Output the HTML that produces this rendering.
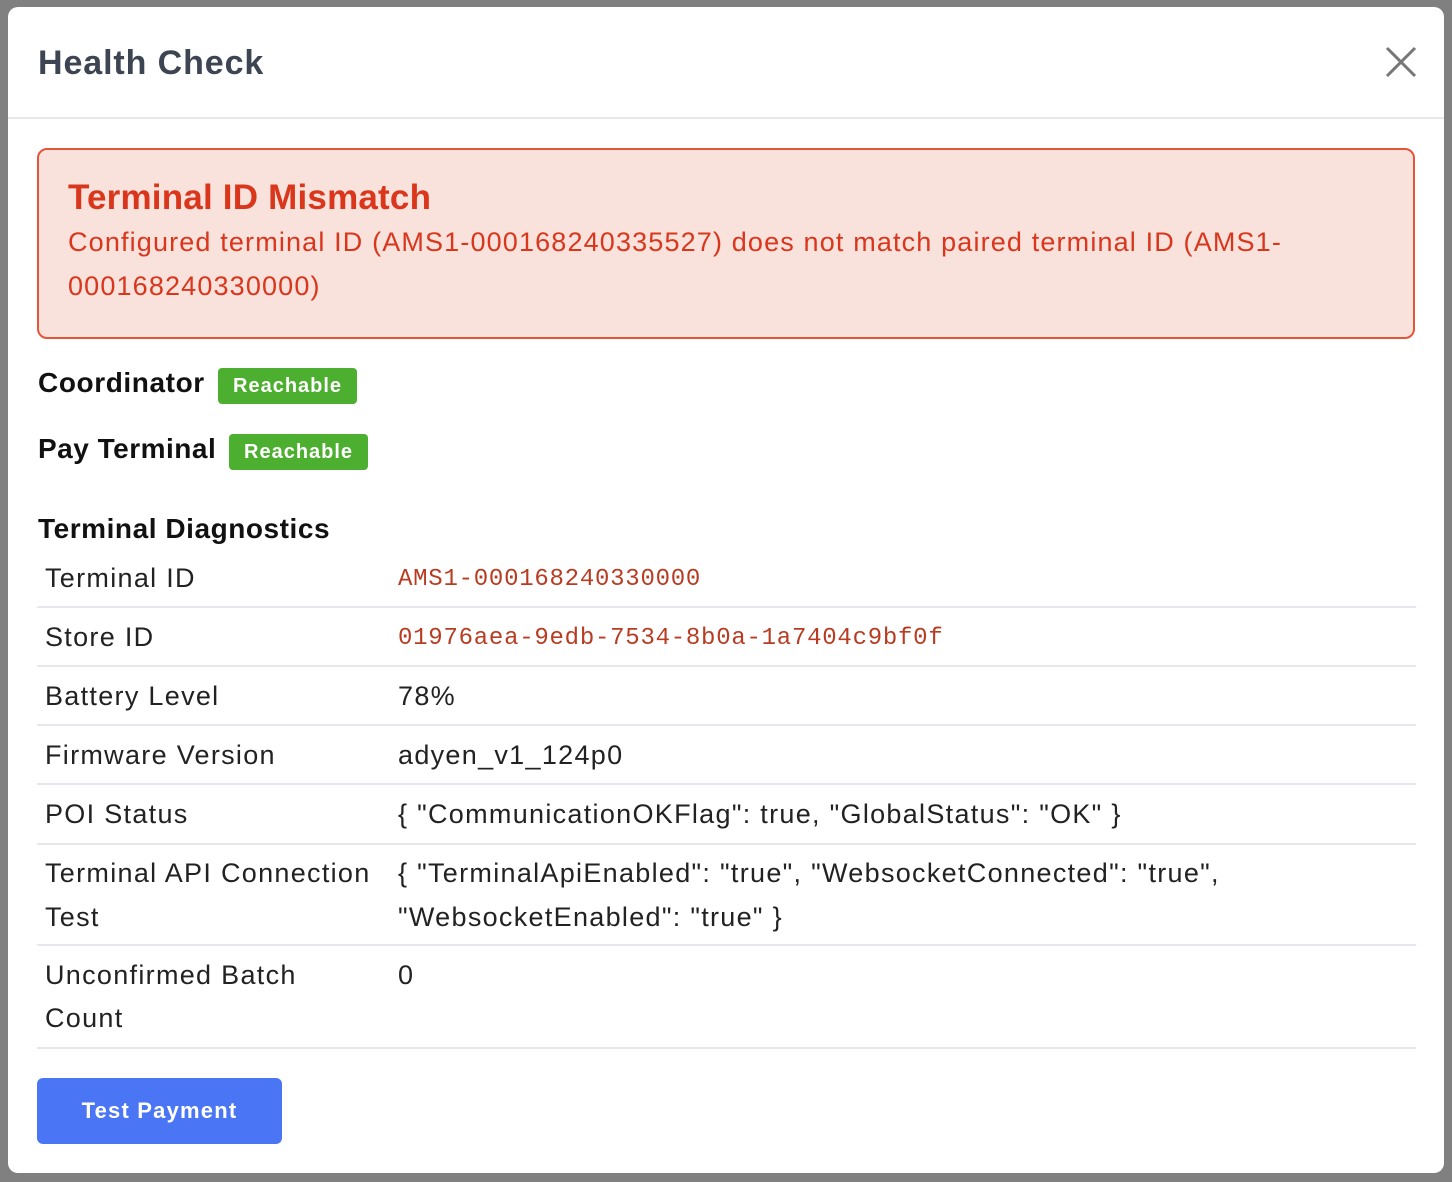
<!DOCTYPE html>
<html><head><style>
body{margin:0;width:1452px;height:1182px;background:#808080;position:relative;overflow:hidden;font-family:"Liberation Sans",sans-serif}
.m{position:absolute;left:8px;top:7px;width:1436px;height:1166px;background:#fff;border-radius:10px}
.a{position:absolute;white-space:nowrap}
.hr{position:absolute;left:37px;width:1379px;height:2px;background:#e6e8ee}
.lbl{font-size:27px;color:#222;letter-spacing:1.3px}
.mono{font-family:"Liberation Mono",monospace;font-size:24px;color:#b83c22;letter-spacing:0.75px}
.badge{position:absolute;background:#4caf2f;color:#fff;font-weight:bold;font-size:20px;border-radius:4px;height:36px;line-height:36px;padding:0 15px;letter-spacing:1px}
</style></head><body>
<div class="m"></div>
<div class="a" style="left:38px;top:44px;font-size:34px;font-weight:bold;color:#3d4452;letter-spacing:0.9px">Health Check</div>
<svg class="a" style="left:1384px;top:45px" width="34" height="34"><path d="M3 3L31 31M31 3L3 31" stroke="#777" stroke-width="3" fill="none"/></svg>
<div class="a" style="left:8px;top:117px;width:1436px;height:2px;background:#e6e8ee"></div>
<div class="a" style="left:37px;top:148px;width:1374px;height:187px;background:#f9e1dc;border:2px solid #e4553a;border-radius:10px"></div>
<div class="a" style="left:68px;top:178px;font-size:35px;font-weight:bold;color:#d9361c;letter-spacing:0.2px">Terminal ID Mismatch</div>
<div class="a" style="left:68px;top:227px;font-size:27px;color:#d9361c;letter-spacing:1.15px">Configured terminal ID (AMS1-000168240335527) does not match paired terminal ID (AMS1-</div>
<div class="a" style="left:68px;top:271px;font-size:27px;color:#d9361c;letter-spacing:1.15px">000168240330000)</div>
<div class="a" style="left:38px;top:367px;font-size:28px;font-weight:bold;color:#111;letter-spacing:0.6px">Coordinator</div>
<div class="badge" style="left:218px;top:368px">Reachable</div>
<div class="a" style="left:38px;top:433px;font-size:28px;font-weight:bold;color:#111;letter-spacing:0.5px">Pay Terminal</div>
<div class="badge" style="left:229px;top:434px">Reachable</div>
<div class="a" style="left:38px;top:513px;font-size:28px;font-weight:bold;color:#111;letter-spacing:0.55px">Terminal Diagnostics</div>

<div class="a lbl" style="left:45px;top:563px">Terminal ID</div>
<div class="a mono" style="left:398px;top:566px">AMS1-000168240330000</div>
<div class="hr" style="top:606px"></div>
<div class="a lbl" style="left:45px;top:622px">Store ID</div>
<div class="a mono" style="left:398px;top:625px">01976aea-9edb-7534-8b0a-1a7404c9bf0f</div>
<div class="hr" style="top:665px"></div>
<div class="a lbl" style="left:45px;top:681px">Battery Level</div>
<div class="a lbl" style="left:398px;top:681px">78%</div>
<div class="hr" style="top:724px"></div>
<div class="a lbl" style="left:45px;top:740px">Firmware Version</div>
<div class="a lbl" style="left:398px;top:740px">adyen_v1_124p0</div>
<div class="hr" style="top:783px"></div>
<div class="a lbl" style="left:45px;top:799px">POI Status</div>
<div class="a lbl" style="left:398px;top:799px">{ "CommunicationOKFlag": true, "GlobalStatus": "OK" }</div>
<div class="hr" style="top:843px"></div>
<div class="a lbl" style="left:45px;top:858px">Terminal API Connection</div>
<div class="a lbl" style="left:45px;top:902px">Test</div>
<div class="a lbl" style="left:398px;top:858px">{ "TerminalApiEnabled": "true", "WebsocketConnected": "true",</div>
<div class="a lbl" style="left:398px;top:902px">"WebsocketEnabled": "true" }</div>
<div class="hr" style="top:944px"></div>
<div class="a lbl" style="left:45px;top:960px">Unconfirmed Batch</div>
<div class="a lbl" style="left:45px;top:1003px">Count</div>
<div class="a lbl" style="left:398px;top:960px">0</div>
<div class="hr" style="top:1047px"></div>
<div class="a" style="left:37px;top:1078px;width:245px;height:66px;background:#4a75f5;border-radius:6px;color:#fff;font-weight:bold;font-size:22px;line-height:66px;text-align:center;letter-spacing:1.2px">Test Payment</div>
</body></html>
